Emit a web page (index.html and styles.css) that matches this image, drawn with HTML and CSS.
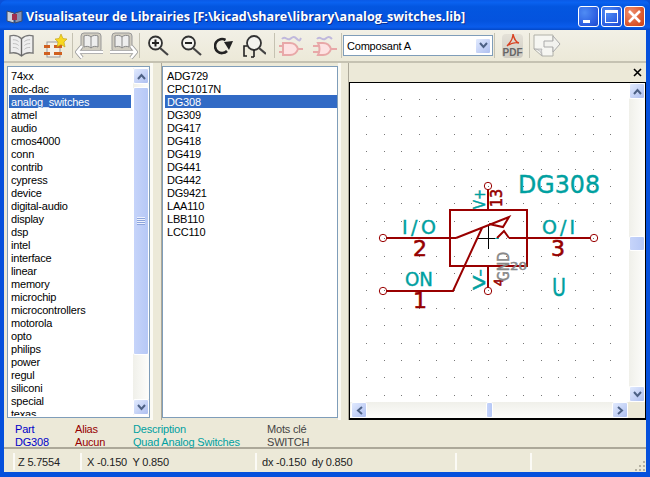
FILE: index.html
```html
<!DOCTYPE html>
<html lang="fr">
<head>
<meta charset="utf-8">
<title>Visualisateur de Librairies</title>
<link rel="stylesheet" href="styles.css">
</head>
<body>
<div class="window">
  <header class="titlebar">
    <svg class="app-icon" width="18" height="16" viewBox="0 0 18 16"><path d="M1 3l7 2v10l-7-2z" fill="#c8d0dc" stroke="#3a4a6a"/><path d="M16 3l-7 2v10l7-2z" fill="#8a94b0" stroke="#3a4a6a"/><rect x="6" y="6" width="5" height="6" fill="#a03050"/></svg>
    <span class="title-text">Visualisateur de Librairies [F:\kicad\share\library\analog_switches.lib]</span>
    <div class="caption-buttons">
      <span class="cap cap-blue"><i class="cap-min"></i></span>
      <span class="cap cap-blue"><i class="cap-max"></i></span>
      <span class="cap cap-red"><svg width="15" height="15" viewBox="0 0 15 15"><path d="M2 2l11 11M13 2L2 13" stroke="#fff" stroke-width="2.6"/></svg></span>
    </div>
  </header>
  <div class="frame">
    <div class="toolbar">
      <span class="tool w30"><svg width="25" height="24" viewBox="0 0 26 25"><path d="M13 5C9 1 5 1 1 2v18c4-1 8-1 12 3 4-4 8-4 12-3V2c-4-1-8-1-12 3z" fill="#eee" stroke="#777" stroke-width="1.4"/><path d="M13 5v18" stroke="#666" stroke-width="1.4"/><path d="M4 6c2 0 4 0 6 2M4 10c2 0 4 0 6 2M4 14c2 0 4 0 6 2M22 6c-2 0-4 0-6 2M22 10c-2 0-4 0-6 2M22 14c-2 0-4 0-6 2" stroke="#bbb" fill="none"/></svg></span>
      <span class="tool w34 ml2"><svg width="24" height="24" viewBox="0 0 24 24"><rect x="4" y="8" width="13" height="15" fill="#f4f0e8" stroke="#999"/><path d="M1 11h6v3H1zM1 18h6v3H1zM11 11h8v3h-8zM11 18h8v3h-8z" fill="#d06020"/><path d="M18 0l2 4.500 4 .5-3 3 1 5-4-2.500-4 2.500 1-5-3-3 4-.5z" fill="#f8d820" stroke="#c0a010" stroke-width=".6"/></svg></span>
      <i class="tool-sep"></i>
      <span class="tool w34"><svg width="30" height="28" viewBox="0 0 30 28"><rect x="6" y="1" width="20" height="19" rx="3" fill="#d0ccc0" stroke="#999"/><path d="M16 5c-2-2-5-2-7-1v11c2-1 5-1 7 1 2-2 5-2 7-1V4c-2-1-5-1-7 1z" fill="#eee" stroke="#888"/><path d="M16 5v11" stroke="#888"/><path d="M7 14l-5 6 5 6M2 20h26" fill="none" stroke="#999" stroke-width="4"/><path d="M7 14l-5 6 5 6M2 20h26" fill="none" stroke="#fff" stroke-width="2.400"/></svg></span>
      <span class="tool w32"><svg width="30" height="28" viewBox="0 0 30 28"><rect x="4" y="1" width="20" height="19" rx="3" fill="#d0ccc0" stroke="#999"/><path d="M14 5c-2-2-5-2-7-1v11c2-1 5-1 7 1 2-2 5-2 7-1V4c-2-1-5-1-7 1z" fill="#eee" stroke="#888"/><path d="M14 5v11" stroke="#888"/><path d="M23 14l5 6-5 6M28 20H2" fill="none" stroke="#999" stroke-width="4"/><path d="M23 14l5 6-5 6M28 20H2" fill="none" stroke="#fff" stroke-width="2.400"/></svg></span>
      <i class="tool-sep"></i>
      <span class="tool w36"><svg width="21" height="21" viewBox="0 0 21 21"><circle cx="7.500" cy="8" r="6.500" fill="#f4f4f0" stroke="#333" stroke-width="1.800"/><path d="M12 13l8 7" stroke="#444" stroke-width="2.200"/><path d="M4 8h7M7.500 4.500v7" stroke="#222" stroke-width="2"/></svg></span>
      <span class="tool w30"><svg width="21" height="21" viewBox="0 0 21 21"><circle cx="7.500" cy="8" r="6.500" fill="#f4f4f0" stroke="#333" stroke-width="1.800"/><path d="M12 13l8 7" stroke="#444" stroke-width="2.200"/><path d="M4 8h7" stroke="#222" stroke-width="2"/></svg></span>
      <span class="tool w36"><svg width="21" height="20" viewBox="214 38 21 20"><path d="M225.500 42a7 7 0 1 0 1.500 11" fill="none" stroke="#222" stroke-width="2.600"/><path d="M224 44l9-1-4 9z" fill="#222"/></svg></span>
      <span class="tool w24 mr8"><svg width="24" height="24" viewBox="243 35 24 24"><circle cx="255" cy="44" r="7" fill="#f4f4f0" stroke="#333" stroke-width="1.800"/><path d="M260 49l7 6" stroke="#444" stroke-width="2.200"/><path d="M248 47h-3v10h3M255 51v7M255 58h-3" fill="none" stroke="#222" stroke-width="1.600"/></svg></span>
      <i class="tool-sep"></i>
      <span class="tool w32"><svg width="24" height="24" viewBox="0 0 24 24"><path d="M3 5c3-4 5 2 8 0s4-3 7 0 3 1 4-1" fill="none" stroke="#c0b8dc" stroke-width="2"/><path d="M4 9h7c5 0 7 3 8 6-1 3-3 6-8 6H4z" fill="#fde2e2" stroke="#e8a8a8" stroke-width="2"/><path d="M19 15h5M0 12h4M0 18h4" stroke="#e8a8a8" stroke-width="2"/></svg></span>
      <span class="tool w34"><svg width="25" height="24" viewBox="0 0 25 24"><path d="M5 5c3-4 5 2 8 0s4-3 7 0" fill="none" stroke="#c0b8dc" stroke-width="2"/><path d="M6 9h5c5 0 7 3 8 6-1 3-3 6-8 6H6c2-4 2-8 0-12z" fill="#fde2e2" stroke="#e8a8a8" stroke-width="2"/><path d="M19 15h6M1 12h7M1 18h7" stroke="#e8a8a8" stroke-width="2"/></svg></span>
      <i class="tool-sep"></i>
      <div class="combo"><span class="combo-text">Composant A</span><span class="sb-btn combo-btn"><svg width="9" height="7" viewBox="0 0 9 7"><path d="M1 1l3.500 4L8 1" class="chev"/></svg></span></div>
      <i class="tool-sep"></i>
      <span class="tool pdf"><svg class="pdf-mark" width="14" height="14" viewBox="0 0 14 14"><path d="M7 0c0 5-3 9-6 12 4-3 8-4 12-3-4-1-5-5-6-9z" fill="none" stroke="#d84020" stroke-width="1.300"/></svg><span class="pdf-label">PDF</span></span>
      <i class="tool-sep"></i>
      <span class="tool w34"><svg width="28" height="24" viewBox="0 0 28 24"><path d="M1 1h19v21H9l-8-7z" fill="#f6f6f2" stroke="#b0b0a8"/><path d="M1 15c4 0 7 2 8 7 0-3-1-6 0-7z" fill="#ddd" stroke="#aaa" stroke-width=".7"/><path d="M11 7h9V2l7 8-7 8v-5h-9z" fill="#f2f2ee" stroke="#aaa"/></svg></span>
    </div>
    <main class="panes">
      <div class="list-box list-libs">
        <ul class="list">
          <li>74xx</li><li>adc-dac</li><li class="selected">analog_switches</li><li>atmel</li><li>audio</li><li>cmos4000</li><li>conn</li><li>contrib</li><li>cypress</li><li>device</li><li>digital-audio</li><li>display</li><li>dsp</li><li>intel</li><li>interface</li><li>linear</li><li>memory</li><li>microchip</li><li>microcontrollers</li><li>motorola</li><li>opto</li><li>philips</li><li>power</li><li>regul</li><li>siliconi</li><li>special</li><li>texas</li>
        </ul>
        <div class="vscroll libs-scroll">
          <span class="sb-btn"><svg width="9" height="7" viewBox="0 0 9 7"><path d="M1 6l3.500-4L8 6" class="chev"/></svg></span>
          <div class="sb-track"><span class="sb-thumb libs-thumb"><i class="grip"></i></span></div>
          <span class="sb-btn"><svg width="9" height="7" viewBox="0 0 9 7"><path d="M1 1l3.500 4L8 1" class="chev"/></svg></span>
        </div>
      </div>
      <i class="sash sash-wide"></i>
      <div class="list-box list-parts">
        <ul class="list">
          <li>ADG729</li><li>CPC1017N</li><li class="selected">DG308</li><li>DG309</li><li>DG417</li><li>DG418</li><li>DG419</li><li>DG441</li><li>DG442</li><li>DG9421</li><li>LAA110</li><li>LBB110</li><li>LCC110</li>
        </ul>
      </div>
      <i class="sash"></i>
      <section class="canvas-pane">
        <div class="pane-caption"><svg width="9" height="9" viewBox="0 0 9 9"><path d="M1 1l7 7M8 1L1 8" stroke="#000" stroke-width="1.600"/></svg></div>
        <div class="canvas-frame">
          <div class="canvas-row">
            <svg class="schematic" width="279" height="319" viewBox="350 83 279 319">
              <defs>
                <path id="dotrow" d="M366 0h1v1h-1zM384 0h1v1h-1zM401 0h1v1h-1zM419 0h1v1h-1zM436 0h1v1h-1zM454 0h1v1h-1zM471 0h1v1h-1zM488 0h1v1h-1zM506 0h1v1h-1zM523 0h1v1h-1zM541 0h1v1h-1zM558 0h1v1h-1zM575 0h1v1h-1zM593 0h1v1h-1zM610 0h1v1h-1z" fill="#777"/>
              </defs>
              <use href="#dotrow" y="99"/><use href="#dotrow" y="116"/><use href="#dotrow" y="134"/><use href="#dotrow" y="151"/><use href="#dotrow" y="169"/><use href="#dotrow" y="186"/><use href="#dotrow" y="203"/><use href="#dotrow" y="221"/><use href="#dotrow" y="238"/><use href="#dotrow" y="256"/><use href="#dotrow" y="273"/><use href="#dotrow" y="290"/><use href="#dotrow" y="308"/><use href="#dotrow" y="325"/><use href="#dotrow" y="343"/><use href="#dotrow" y="360"/><use href="#dotrow" y="377"/><use href="#dotrow" y="395"/>
              <path class="cursor" d="M478 238.500h17M488.500 225v24"/>
              <path class="cursor-teal" d="M495 238.500h4"/>
              <g class="wire">
                <rect x="450" y="210" width="77" height="56"/>
                <path d="M387 238h69M509 238h81M387 291h66l29-63M488 190v20M488 266v21M456 238l53-21-6 10-14-3M497 238l7-7 5 7"/>
              </g>
              <g class="pin-end">
                <circle cx="383" cy="238" r="3.700"/><circle cx="594" cy="238" r="3.700"/><circle cx="383" cy="291" r="3.700"/><circle cx="488" cy="186" r="3.700"/><circle cx="488" cy="291" r="3.700"/>
              </g>
              <text class="teal" x="518" y="193" font-size="25" textLength="82" lengthAdjust="spacingAndGlyphs">DG308</text>
              <text class="teal" x="402" y="234" font-size="19" textLength="34" lengthAdjust="spacing">I/O</text>
              <text class="teal" x="542" y="234" font-size="19" textLength="33" lengthAdjust="spacing">O/I</text>
              <text class="teal" x="405" y="286" font-size="19" textLength="28" lengthAdjust="spacingAndGlyphs">ON</text>
              <text class="teal" x="552" y="296" font-size="25" textLength="14" lengthAdjust="spacingAndGlyphs">U</text>
              <text class="red" x="413" y="256" font-size="22">2</text>
              <text class="red" x="551" y="256" font-size="22">3</text>
              <text class="red" x="413" y="308" font-size="22">1</text>
              <text class="teal" transform="translate(485 209) rotate(-90)" font-size="16" textLength="20" lengthAdjust="spacingAndGlyphs">V+</text>
              <text class="teal" transform="translate(485 290) rotate(-90)" font-size="16" textLength="21" lengthAdjust="spacingAndGlyphs">V-</text>
              <text class="red" transform="translate(502 207) rotate(-90)" font-size="16" textLength="18" lengthAdjust="spacingAndGlyphs">13</text>
              <text class="red" transform="translate(503 286) rotate(-90)" font-size="12">4</text>
              <text class="grey" transform="translate(509 281) rotate(-90)" font-size="16" textLength="29" lengthAdjust="spacingAndGlyphs">GND</text>
              <text class="grey" x="510" y="270" font-size="10" textLength="17" lengthAdjust="spacingAndGlyphs">20</text>
            </svg>
            <div class="vscroll canvas-v">
              <span class="sb-btn"><svg width="9" height="7" viewBox="0 0 9 7"><path d="M1 6l3.500-4L8 6" class="chev"/></svg></span>
              <div class="sb-track canvas-track-v"><span class="sb-thumb canvas-thumb-v"></span></div>
              <span class="sb-btn"><svg width="9" height="7" viewBox="0 0 9 7"><path d="M1 1l3.500 4L8 1" class="chev"/></svg></span>
            </div>
          </div>
          <div class="hscroll">
            <span class="sb-btn"><svg width="7" height="9" viewBox="0 0 7 9"><path d="M6 1L2 4.500 6 8" class="chev"/></svg></span>
            <div class="sb-track-h"><span class="sb-thumb canvas-thumb-h"></span></div>
            <span class="sb-btn"><svg width="7" height="9" viewBox="0 0 7 9"><path d="M1 1l4 3.500L1 8" class="chev"/></svg></span>
            <i class="corner"></i>
          </div>
        </div>
      </section>
    </main>
    <div class="msgpanel">
      <div class="msg msg-part c-blue"><span>Part</span><span>DG308</span></div>
      <div class="msg msg-alias c-red"><span>Alias</span><span>Aucun</span></div>
      <div class="msg msg-desc c-teal"><span>Description</span><span>Quad Analog Switches</span></div>
      <div class="msg c-dark"><span>Mots clé</span><span>SWITCH</span></div>
    </div>
    <footer class="statusbar">
      <span class="st st-z">Z 5.7554</span>
      <span class="st st-xy">X -0.150&nbsp; Y 0.850</span>
      <span class="st st-dx">dx -0.150&nbsp; dy 0.850</span>
      <span class="st st-e"></span>
      <span class="st st-last"><svg class="grip-corner" width="12" height="12" viewBox="0 0 12 12"><path d="M9 1h2v2H9zM5 5h2v2H5zM9 5h2v2H9zM1 9h2v2H1zM5 9h2v2H5zM9 9h2v2H9z" fill="#b5b2a3"/></svg></span>
    </footer>
  </div>
</div>
</body>
</html>
```
FILE: styles.css
```css
* { box-sizing: border-box; }
html, body { margin: 0; padding: 0; }
body { width: 650px; height: 477px; overflow: hidden; background: #0a50d8; font-family: "Liberation Sans", "Noto Sans", sans-serif; font-size: 11px; letter-spacing: -.2px; color: #000; }
.window { width: 650px; height: 477px; display: flex; flex-direction: column; background: #0550dc; border-radius: 7px 7px 0 0; overflow: hidden; }
.titlebar { height: 30px; flex: none; display: flex; align-items: center; padding: 2px 5px 0 6px; background: linear-gradient(#0a5ae6 0, #0a62f0 8%, #0356e0 22%, #0453de 70%, #0a5cec 90%, #0348c8 100%); color: #fff; }
.app-icon { flex: none; margin-right: 2px; }
.title-text { flex: 1; font-family: "Open Sans", sans-serif; font-weight: 700; font-size: 12.600px; letter-spacing: 0; text-shadow: 1px 1px 0 #0a2f90; white-space: nowrap; }
.caption-buttons { display: flex; gap: 2px; }
.cap { width: 21px; height: 21px; border: 1px solid #fff; border-radius: 3px; display: flex; align-items: center; justify-content: center; position: relative; }
.cap-blue { background: radial-gradient(circle at 30% 30%, #4f8cf4, #2a5ce0 70%, #1a48c8); }
.cap-red { background: radial-gradient(circle at 30% 30%, #ee9070, #dc5a30 60%, #c84018); }
.cap-min { width: 7px; height: 3px; background: #fff; margin-top: 10px; margin-right: 4px; }
.cap-max { width: 13px; height: 13px; border: 1px solid #fff; border-top-width: 3px; }
.frame { flex: 1; min-height: 0; margin: 0 4px 5px; background: #ece9d8; display: flex; flex-direction: column; }
.toolbar { height: 33px; flex: none; display: flex; align-items: center; padding-left: 2px; border-bottom: 2px solid #c5c2b2; background: linear-gradient(#f2f0e6, #ece9d8); }
.tool { height: 30px; display: flex; align-items: center; justify-content: center; flex: none; }
.w24 { width: 24px; }
.w30 { width: 30px; }
.w32 { width: 32px; }
.w34 { width: 34px; }
.w36 { width: 36px; }
.ml2 { margin-left: 2px; }
.mr8 { margin-right: 8px; }
.tool-sep { width: 1px; height: 25px; background: #c5c2b2; flex: none; }
.combo { flex: none; width: 150px; height: 21px; margin: 0 1px; border: 1px solid #7f9db9; background: #fff; display: flex; align-items: center; justify-content: space-between; padding: 0 1px 0 3px; }
.combo-text { font-size: 11px; }
.combo-btn { height: 17px; width: 16px; }
.pdf { width: 21px; height: 24px; margin: 0 6px 0 7px; background: linear-gradient(#e4e1d8, #cfccc2); border-radius: 4px; flex-direction: column; justify-content: flex-start; }
.pdf-mark { flex: none; }
.pdf-label { font-family: "Liberation Sans", sans-serif; font-size: 10px; font-weight: 700; letter-spacing: 0; color: #666; line-height: 9px; }
.panes { height: 357px; flex: none; display: flex; }
.list-box { margin-top: 3px; border: 1px solid #7f9db9; background: #fff; display: flex; overflow: hidden; height: 352px; padding: 1px 0 1px 1px; }
.list-libs { width: 143px; margin-left: 3px; }
.list-libs .list { margin-right: 2px; }
.list-parts { width: 176px; padding-left: 2px; }
.sash { width: 11px; flex: none; border-right: 1px solid #aca899; background: linear-gradient(90deg, #fbfaf4 0 25%, #ece9d8 25%); }
.sash-wide { width: 12px; }
.list { list-style: none; margin: 0; padding: 0; flex: 1; min-width: 0; overflow: hidden; }
.list li { height: 13px; line-height: 15px; padding-left: 2px; white-space: nowrap; }
.list li:first-child { margin-top: 1px; }
.list .selected { background: #316ac5; color: #fff; }
.vscroll { width: 16px; flex: none; display: flex; flex-direction: column; background: #f4f4f0; }
.libs-scroll { margin-bottom: 1px; }
.sb-btn { flex: none; width: 16px; height: 16px; border: 1px solid #fff; border-radius: 2px; background: linear-gradient(135deg, #e1eafe, #aebff0); display: flex; align-items: center; justify-content: center; }
.chev { fill: none; stroke: #4d6185; stroke-width: 2; }
.sb-track { flex: 1; min-height: 0; display: flex; flex-direction: column; background: linear-gradient(90deg, #f0f0ea, #fdfdfb); }
.sb-thumb { display: flex; align-items: center; justify-content: center; border: 1px solid #fff; border-radius: 2px; background: linear-gradient(90deg, #c6d4fa, #b6c8f6); }
.libs-thumb { height: 268px; width: 16px; margin-top: 3px; }
.grip { width: 8px; height: 8px; background: repeating-linear-gradient(#eef2fd 0 1px, #8ca4dc 1px 2px); }
.canvas-pane { flex: 1; min-width: 0; display: flex; flex-direction: column; }
.pane-caption { height: 19px; flex: none; display: flex; align-items: center; justify-content: flex-end; padding-right: 4px; }
.canvas-frame { flex: 1; min-height: 0; border: 1px solid #000; border-width: 1px 1px 2px; background: #ece9d8; display: flex; flex-direction: column; }
.canvas-row { flex: 1; min-height: 0; display: flex; }
.schematic { flex: none; background: #fff; display: block; }
.canvas-v { background: #fafaf7; }
.canvas-track-v { justify-content: flex-start; }
.canvas-thumb-v { width: 16px; height: 15px; margin-top: 137px; }
.hscroll { height: 16px; flex: none; display: flex; padding-left: 1px; background: linear-gradient(#f0f0ea, #fdfdfb); }
.sb-track-h { flex: 1; min-width: 0; display: flex; padding-left: 119px; }
.canvas-thumb-h { width: 7px; height: 16px; }
.corner { width: 17px; flex: none; background: #ece9d8; }
.msgpanel { height: 29px; flex: none; display: flex; padding: 3px 0 0 11px; border-bottom: 2px solid #aca899; }
.msg { display: flex; flex-direction: column; line-height: 13px; }
.msg-part { width: 60px; }
.msg-alias { width: 58px; }
.msg-desc { width: 134px; }
.c-blue { color: #0000c8; }
.c-red { color: #960000; }
.c-teal { color: #00a0a0; }
.c-dark { color: #444; }
.statusbar { flex: 1; min-height: 0; display: flex; }
.st { display: flex; align-items: center; border-right: 2px solid #fbfaf5; padding-left: 5px; white-space: nowrap; color: #222; margin: 4px 0 2px; }
.st-z { width: 69px; margin-left: 9px; border-left: 2px solid #fbfaf5; padding-left: 3px; }
.st-xy { width: 175px; }
.st-dx { width: 200px; }
.st-e { width: 75px; }
.st-last { flex: 1; border-right: 0; justify-content: flex-end; align-items: flex-end; margin-bottom: 0; }
.wire rect, .wire path { fill: none; stroke: #990000; stroke-width: 2; }
.pin-end circle { fill: none; stroke: #990000; stroke-width: 1; }
.cursor { fill: none; stroke: #000; stroke-width: 1; }
.cursor-teal { fill: none; stroke: #00c0c0; stroke-width: 1; }
.schematic text { font-family: "DejaVu Sans", sans-serif; letter-spacing: 0; }
.teal { fill: #00a0a0; stroke: #00a0a0; stroke-width: .4; }
.red { fill: #960000; stroke: #960000; stroke-width: .6; }
.grey { fill: #888; stroke: #888; stroke-width: .5; }
```
